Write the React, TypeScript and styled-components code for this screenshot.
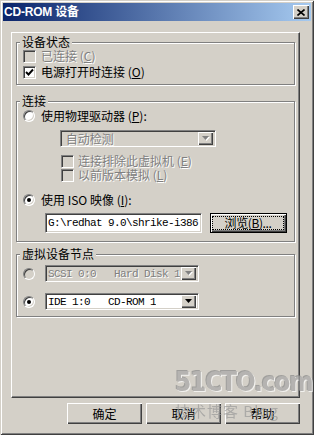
import styled, { createGlobalStyle } from "styled-components";

const GlobalStyle = createGlobalStyle`
  html, body {
    margin: 0;
    padding: 0;
    background: #d4d0c8;
  }
  body {
    font-family: "Noto Sans CJK SC", "Liberation Sans", sans-serif;
    font-size: 12px;
    color: #000;
  }
`;

const Window = styled.div`
  position: relative;
  width: 314px;
  height: 435px;
  box-sizing: border-box;
  padding: 3px;
  background: #d4d0c8;
  box-shadow: inset 1px 1px 0 #d4d0c8, inset -1px -1px 0 #404040,
    inset 2px 2px 0 #fff, inset -2px -2px 0 #808080;
  display: flex;
  flex-direction: column;
  overflow: hidden;
`;

const TitleBar = styled.div`
  height: 18px;
  display: flex;
  align-items: center;
  justify-content: space-between;
  padding: 0 2px 0 1px;
  background: linear-gradient(to right, #0a246a, #a6caf0);
`;

const Title = styled.span`
  font-family: "Liberation Sans", "Noto Sans CJK SC", sans-serif;
  font-weight: bold;
  font-size: 12px;
  color: #fff;
  line-height: 18px;
  letter-spacing: -0.2px;
`;

const CloseButton = styled.div`
  width: 16px;
  height: 14px;
  box-sizing: border-box;
  background: #d4d0c8;
  box-shadow: inset 1px 1px 0 #fff, inset -1px -1px 0 #404040,
    inset -2px -2px 0 #808080;
  display: flex;
  align-items: center;
  justify-content: center;
`;

const Body = styled.div`
  display: flex;
  flex-direction: column;
  padding: 11px 11px 0 8px;
`;

const Panel = styled.div`
  height: 366px;
  box-sizing: border-box;
  border: 1px solid;
  border-color: #fff #404040 #404040 #fff;
  box-shadow: inset -1px -1px 0 #808080;
  padding: 9px 4px 0 4px;
  display: flex;
  flex-direction: column;
`;

const Group = styled.div<{ $top: number; $pb: number }>`
  margin-top: ${(p) => p.$top}px;
  border: 1px solid #808080;
  box-shadow: 1px 1px 0 #fff, inset 1px 1px 0 #fff;
  padding: 0 6px ${(p) => p.$pb}px 6px;
  display: flex;
  flex-direction: column;
`;

const Caption = styled.div<{ $after: number }>`
  align-self: flex-start;
  margin: -8px 0 ${(p) => p.$after}px -3px;
  padding: 0 2px;
  height: 14px;
  line-height: 14px;
  background: #d4d0c8;
`;

const Row = styled.div<{ $h: number; $mt?: number; $indent?: number; $gap?: number }>`
  display: flex;
  align-items: center;
  height: ${(p) => p.$h}px;
  margin-top: ${(p) => p.$mt ?? 0}px;
  margin-left: ${(p) => p.$indent ?? 0}px;
  gap: ${(p) => p.$gap ?? 5}px;
`;

const Label = styled.span<{ $disabled?: boolean }>`
  white-space: nowrap;
  line-height: 14px;
  color: ${(p) => (p.$disabled ? "#808080" : "#000")};
  text-shadow: ${(p) => (p.$disabled ? "1px 1px 0 #fff" : "none")};
`;

const U = styled.span`
  text-decoration: underline;
`;

const sunken = `
  box-sizing: border-box;
  border: 1px solid;
  border-color: #808080 #fff #fff #808080;
  box-shadow: inset 1px 1px 0 #404040, inset -1px -1px 0 #d4d0c8;
`;

const CheckBox = styled.span<{ $disabled?: boolean }>`
  ${sunken}
  flex: none;
  width: 13px;
  height: 13px;
  background: ${(p) => (p.$disabled ? "#d4d0c8" : "#fff")};
  display: flex;
  align-items: center;
  justify-content: center;
`;

const Radio = styled.span<{ $checked?: boolean; $disabled?: boolean }>`
  ${sunken}
  position: relative;
  flex: none;
  width: 12px;
  height: 12px;
  border-radius: 50%;
  background: ${(p) => (p.$disabled ? "#d4d0c8" : "#fff")};

  &::after {
    content: "";
    display: ${(p) => (p.$checked ? "block" : "none")};
    position: absolute;
    left: 3px;
    top: 3px;
    width: 4px;
    height: 4px;
    border-radius: 50%;
    background: #000;
  }
`;

const Select = styled.div<{ $w: number; $disabled?: boolean }>`
  ${sunken}
  width: ${(p) => p.$w}px;
  height: 17px;
  padding: 1px 2px 1px 2px;
  background: ${(p) => (p.$disabled ? "#d4d0c8" : "#fff")};
  display: flex;
  align-items: center;
  justify-content: space-between;
`;

const Mono = styled.span<{ $disabled?: boolean }>`
  font-family: "Liberation Mono", "DejaVu Sans Mono", monospace;
  font-size: 11px;
  letter-spacing: -0.6px;
  white-space: pre;
  overflow: hidden;
  color: ${(p) => (p.$disabled ? "#808080" : "#000")};
  text-shadow: ${(p) => (p.$disabled ? "1px 1px 0 #fff" : "none")};
`;

const ArrowButton = styled.span`
  flex: none;
  width: 15px;
  height: 13px;
  box-sizing: border-box;
  background: #d4d0c8;
  box-shadow: inset 1px 1px 0 #fff, inset -1px -1px 0 #404040,
    inset -2px -2px 0 #808080;
  display: flex;
  align-items: center;
  justify-content: center;
`;

const TextBox = styled.div`
  ${sunken}
  width: 157px;
  height: 20px;
  padding: 0 2px;
  background: #fff;
  display: flex;
  align-items: center;
  overflow: hidden;
`;

const DefaultButton = styled.div`
  width: 77px;
  height: 20px;
  box-sizing: border-box;
  border: 1px solid #000;
  background: #d4d0c8;
  box-shadow: inset 1px 1px 0 #fff, inset -1px -1px 0 #404040,
    inset -2px -2px 0 #808080;
  padding: 3px 3px 3px 2px;
  display: flex;
`;

const FocusRing = styled.span`
  flex: 1;
  outline: 1px dotted #000;
  display: flex;
  align-items: center;
  justify-content: center;
  line-height: 12px;
  white-space: nowrap;
  letter-spacing: -0.4px;
`;

const ButtonRow = styled.div`
  display: flex;
  justify-content: flex-end;
  gap: 4px;
  margin-top: 5px;
`;

const PushButton = styled.div`
  width: 75px;
  height: 21px;
  box-sizing: border-box;
  background: #d4d0c8;
  box-shadow: inset 1px 1px 0 #fff, inset -1px -1px 0 #404040,
    inset -2px -2px 0 #808080;
  display: flex;
  align-items: center;
  justify-content: center;
`;

const Watermark = styled.div`
  position: absolute;
  left: 175px;
  top: 366px;
  display: flex;
  flex-direction: column;
  pointer-events: none;
  opacity: 0.7;
`;

const MarkBig = styled.span`
  font-family: "DejaVu Sans Condensed", "DejaVu Sans", sans-serif;
  font-weight: bold;
  font-size: 26px;
  letter-spacing: -1.2px;
  line-height: 32px;
  color: #a8a8a8;
  text-shadow: 1px 1px 0 #fff, -1px -1px 0 #8a8a8a;
`;

const MarkSmall = styled.span`
  margin-top: 4px;
  font-size: 15px;
  line-height: 18px;
  color: #9a9a9a;
  letter-spacing: 1px;
  white-space: nowrap;
`;

const Arrow = ({ disabled }: { disabled?: boolean }) => (
  <svg width="8" height="5" viewBox="0 0 8 5">
    {disabled && <path d="M1 1h7L4.5 5z" fill="#fff" />}
    <path d="M0 0h7L3.5 4z" fill={disabled ? "#808080" : "#000"} />
  </svg>
);

const Check = () => (
  <svg width="9" height="9" viewBox="0 0 9 9">
    <path d="M1 4l2.5 2.5L8 1.5" fill="none" stroke="#000" strokeWidth="1.9" />
  </svg>
);

export default function App() {
  return (
    <>
      <GlobalStyle />
      <Window>
        <TitleBar>
          <Title>CD-ROM 设备</Title>
          <CloseButton>
            <svg width="8" height="7" viewBox="0 0 8 7">
              <path d="M0.5 0.5l7 6M7.5 0.5l-7 6" stroke="#000" strokeWidth="1.6" />
            </svg>
          </CloseButton>
        </TitleBar>
        <Body>
          <Panel>
            <Group $top={0} $pb={4}>
              <Caption $after={-1}>设备状态</Caption>
              <Row $h={16}>
                <CheckBox $disabled />
                <Label $disabled>
                  已连接 (<U>C</U>)
                </Label>
              </Row>
              <Row $h={16}>
                <CheckBox>
                  <Check />
                </CheckBox>
                <Label>
                  电源打开时连接 (<U>O</U>)
                </Label>
              </Row>
            </Group>

            <Group $top={16} $pb={8}>
              <Caption $after={0}>连接</Caption>
              <Row $h={16} $gap={6}>
                <Radio />
                <Label>
                  使用物理驱动器 (<U>P</U>):
                </Label>
              </Row>
              <Row $h={17} $mt={6} $indent={37}>
                <Select $w={156} $disabled>
                  <Label $disabled>&nbsp;自动检测</Label>
                  <ArrowButton>
                    <Arrow disabled />
                  </ArrowButton>
                </Select>
              </Row>
              <Row $h={14} $mt={7} $indent={38} $gap={4}>
                <CheckBox $disabled />
                <Label $disabled>
                  连接排除此虚拟机 (<U>E</U>)
                </Label>
              </Row>
              <Row $h={14} $indent={38} $gap={4}>
                <CheckBox $disabled />
                <Label $disabled>
                  以前版本模拟 (<U>L</U>)
                </Label>
              </Row>
              <Row $h={16} $mt={10} $gap={6}>
                <Radio $checked />
                <Label>
                  使用 ISO 映像 (<U>I</U>):
                </Label>
              </Row>
              <Row $h={20} $mt={5} $indent={22} $gap={8}>
                <TextBox>
                  <Mono>G:\redhat 9.0\shrike-i386-</Mono>
                </TextBox>
                <DefaultButton>
                  <FocusRing>
                    浏览(<U>B</U>)...
                  </FocusRing>
                </DefaultButton>
              </Row>
            </Group>

            <Group $top={12} $pb={6}>
              <Caption $after={4}>虚拟设备节点</Caption>
              <Row $h={17} $gap={10}>
                <Radio $disabled />
                <Select $w={154} $disabled>
                  <Mono $disabled>SCSI 0:0   Hard Disk 1</Mono>
                  <ArrowButton>
                    <Arrow disabled />
                  </ArrowButton>
                </Select>
              </Row>
              <Row $h={17} $mt={11} $gap={10}>
                <Radio $checked />
                <Select $w={154}>
                  <Mono>IDE 1:0   CD-ROM 1</Mono>
                  <ArrowButton>
                    <Arrow />
                  </ArrowButton>
                </Select>
              </Row>
            </Group>
          </Panel>
          <ButtonRow>
            <PushButton>确定</PushButton>
            <PushButton>取消</PushButton>
            <PushButton>帮助</PushButton>
          </ButtonRow>
        </Body>
        <Watermark>
          <MarkBig>51CTO.com</MarkBig>
          <MarkSmall>技术博客 Blog</MarkSmall>
        </Watermark>
      </Window>
    </>
  );
}
